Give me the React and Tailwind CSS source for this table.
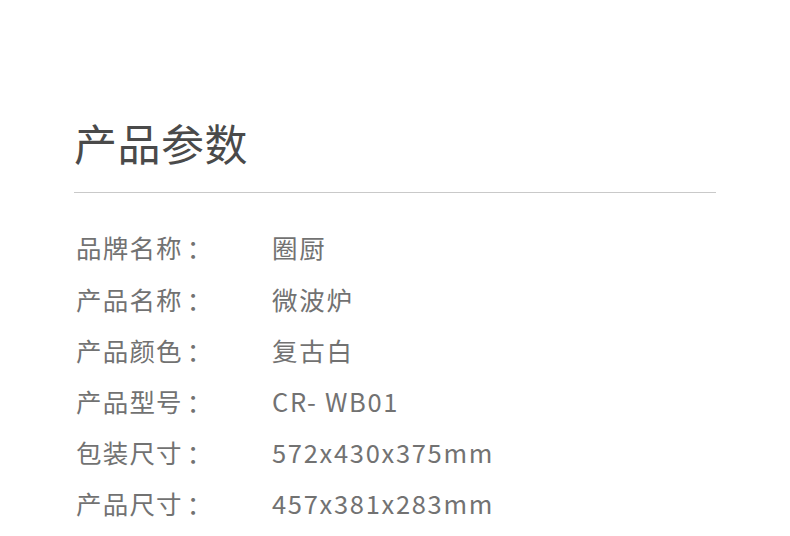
const specs = [
  ['品牌名称', '圈厨'],
  ['产品名称', '微波炉'],
  ['产品颜色', '复古白'],
  ['产品型号', 'CR- WB01'],
  ['包装尺寸', '572x430x375mm'],
  ['产品尺寸', '457x381x283mm'],
];

export default function App() {
  return (
    <div
      className="w-[790px] h-[536px] bg-white overflow-hidden"
      style={{ fontFamily: '"Noto Sans CJK SC", "Noto Sans", sans-serif' }}
    >
      <div className="pl-[74px] pr-[74px] pt-[112px]">
        <h1 className="text-[43px] leading-[60px] tracking-[0.5px] text-[#4a4a4a] font-normal">产品参数</h1>
        <div className="mt-[20px] h-px bg-[#c9c9c9]" />
        <div className="mt-[29px] flex flex-col">
          {specs.map(([label, value]) => (
            <div key={label} className="flex items-center h-[51.2px] text-[25.5px] text-[#727272]">
              <span className="w-[198px] pl-[2px] tracking-[1.2px]">
                {label}
                <span className="ml-[4px]">：</span>
              </span>
              <span className="tracking-[1.7px]">{value}</span>
            </div>
          ))}
        </div>
      </div>
    </div>
  );
}
